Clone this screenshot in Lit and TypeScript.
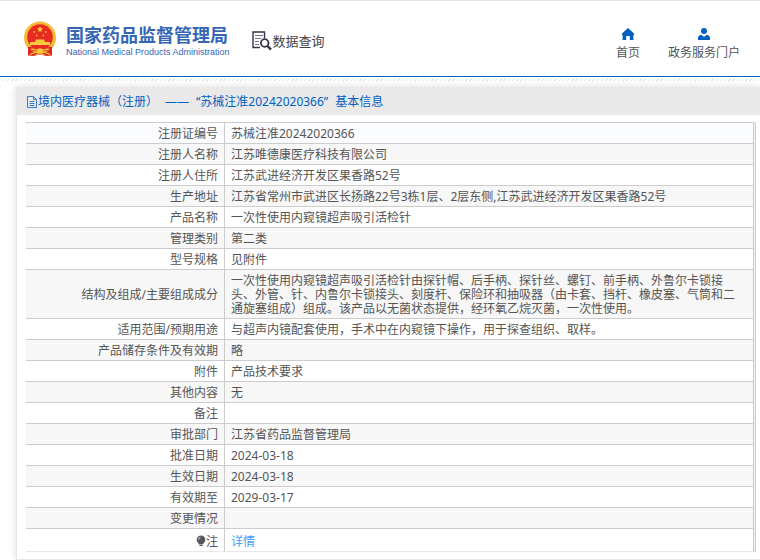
import { LitElement, html, css, svg } from "lit";
import { customElement } from "lit/decorators.js";

interface Row {
  label: string;
  value: string;
}

const ROWS: Row[] = [
  { label: "注册证编号", value: "苏械注准20242020366" },
  { label: "注册人名称", value: "江苏唯德康医疗科技有限公司" },
  { label: "注册人住所", value: "江苏武进经济开发区果香路52号" },
  { label: "生产地址", value: "江苏省常州市武进区长扬路22号3栋1层、2层东侧,江苏武进经济开发区果香路52号" },
  { label: "产品名称", value: "一次性使用内窥镜超声吸引活检针" },
  { label: "管理类别", value: "第二类" },
  { label: "型号规格", value: "见附件" },
  {
    label: "结构及组成/主要组成成分",
    value:
      "一次性使用内窥镜超声吸引活检针由探针帽、后手柄、探针丝、螺钉、前手柄、外鲁尔卡锁接头、外管、针、内鲁尔卡锁接头、刻度杆、保险环和抽吸器（由卡套、挡杆、橡皮塞、气筒和二通旋塞组成）组成。该产品以无菌状态提供，经环氧乙烷灭菌，一次性使用。",
  },
  { label: "适用范围/预期用途", value: "与超声内镜配套使用，手术中在内窥镜下操作，用于探查组织、取样。" },
  { label: "产品储存条件及有效期", value: "略" },
  { label: "附件", value: "产品技术要求" },
  { label: "其他内容", value: "无" },
  { label: "备注", value: "" },
  { label: "审批部门", value: "江苏省药品监督管理局" },
  { label: "批准日期", value: "2024-03-18" },
  { label: "生效日期", value: "2024-03-18" },
  { label: "有效期至", value: "2029-03-17" },
  { label: "变更情况", value: "" },
];

const star = (cx: number, cy: number, r: number) => {
  const points = Array.from({ length: 10 }, (_, i) => {
    const radius = i % 2 ? r * 0.42 : r;
    const angle = (Math.PI / 5) * i - Math.PI / 2;
    return `${(cx + radius * Math.cos(angle)).toFixed(2)},${(cy + radius * Math.sin(angle)).toFixed(2)}`;
  }).join(" ");
  return svg`<polygon points=${points} fill="#fbd23c" />`;
};

@customElement("nmpa-header")
export class NmpaHeader extends LitElement {
  static styles = css`
    :host {
      display: block;
      border-top: 1px solid #e2e2e2;
      border-bottom: 1px solid #0061c1;
    }
    .bar {
      display: flex;
      align-items: center;
      height: 75px;
      padding: 0 20px 0 23px;
    }
    a {
      color: inherit;
      text-decoration: none;
    }
    .brand {
      display: flex;
      align-items: center;
      gap: 9px;
      color: #3566b4;
    }
    .emblem {
      width: 34px;
      height: 36px;
    }
    .names {
      display: flex;
      flex-direction: column;
      padding-top: 4px;
      white-space: nowrap;
    }
    .zh {
      font-size: 18px;
      line-height: 22px;
      font-weight: 700;
    }
    .en {
      font: 9px/12px "Liberation Sans", Arial, sans-serif;
    }
    .query {
      display: flex;
      align-items: center;
      gap: 1px;
      margin: 4px 0 0 22px;
      font-size: 13px;
      line-height: 20px;
      color: #44444a;
      white-space: nowrap;
    }
    nav {
      display: flex;
      gap: 28px;
      margin-left: auto;
      padding-top: 12px;
      font-size: 12px;
      line-height: 18px;
      color: #555;
      white-space: nowrap;
    }
    nav a {
      display: flex;
      flex-direction: column;
      align-items: center;
      gap: 4px;
    }
    nav svg {
      fill: #0061c1;
    }
  `;

  render() {
    return html`
      <header class="bar">
        <a class="brand" href="#">
          <svg class="emblem" viewBox="0 0 34 36" aria-hidden="true">
            <path d="M5 24 H29 V34.6 L24 35 L17 33.4 L10 35 L5 34.6 Z" fill="#d92a20" />
            <circle cx="17" cy="16.5" r="16" fill="#f5bb34" />
            <circle cx="17" cy="16" r="12.8" fill="#e82a22" />
            ${star(17, 8.4, 3.4)} ${star(11.2, 11, 1.4)} ${star(22.8, 11, 1.4)}
            ${star(13.6, 14.4, 1.3)} ${star(20.4, 14.4, 1.3)}
            <path d="M13 18.4 h8 l1 2.6 h5 v3 h-20 v-3 h5 Z" fill="#f9c93a" />
            <path d="M4.6 26 Q11 25 17 28.4 Q23 25 29.4 26 L28.4 30 Q21 29 17 31.4 Q13 29 5.6 30 Z" fill="#de2d22" />
            <path d="M8 28.4 Q13 27.6 17 30.8 Q21 27.6 26 28.4" fill="none" stroke="#f7bd38" stroke-width="1.3" />
            <circle cx="17" cy="30" r="2.8" fill="#f9c93a" />
            <path d="M7 33.4 L14 31 M27 33.4 L20 31 M13 34 L17 32.2 L21 34" fill="none" stroke="#f5b62d" stroke-width="1.3" />
          </svg>
          <span class="names">
            <span class="zh">国家药品监督管理局</span>
            <span class="en">National Medical Products Administration</span>
          </span>
        </a>
        <a class="query" href="#">
          <svg width="20" height="20" viewBox="0 0 20 20" fill="none" stroke="#34344a" aria-hidden="true">
            <path d="M12.5 7 V1 H1 V16.5 H8" stroke-width="1.4" />
            <path d="M3 4.5 H11 M3 7.5 H9 M3 10.5 H7 M3 13.5 H7" stroke-width="1" stroke="#777785" />
            <circle cx="12.7" cy="12" r="3.8" stroke-width="1.8" />
            <path d="M15.5 15 L19 18.6" stroke-width="2.4" />
          </svg>
          <span>数据查询</span>
        </a>
        <nav>
          <a href="#">
            <svg width="12" height="12" viewBox="0 0 12 12" aria-hidden="true">
              <path d="M6 0 L12 5.4 V7 H11.4 V12 H7.8 V8 H4.2 V12 H0.6 V7 H0 V5.4 Z" />
            </svg>
            <span>首页</span>
          </a>
          <a href="#">
            <svg width="12" height="12" viewBox="0 0 12 12" aria-hidden="true">
              <circle cx="6" cy="3" r="3" />
              <path d="M0 12 V10 Q0.2 7.4 3.4 6.8 L6 9 L8.6 6.8 Q11.8 7.4 12 10 V12 Z" />
            </svg>
            <span>政务服务门户</span>
          </a>
        </nav>
      </header>
    `;
  }
}

@customElement("device-detail")
export class DeviceDetail extends LitElement {
  static styles = css`
    :host {
      display: block;
      margin-left: 16px;
      border: 1px solid #e6e6e6;
      border-width: 0 0 1px 1px;
      background: #fff;
      box-shadow: 0 0 8px rgba(0, 0, 0, 0.14);
    }
    .title {
      display: flex;
      align-items: center;
      margin: 0;
      padding: 5px 9px 3px;
      background: #e9e9e9;
      font-size: 12px;
      line-height: 20px;
      font-weight: 400;
      color: #0061c1;
      white-space: nowrap;
    }
    .parts {
      display: flex;
      gap: 7px;
    }
    .frame {
      margin: 7px 4px 7px 9px;
      border-right: 1px solid #cfcfd6;
      padding-right: 1px;
      background: #f0f0f6;
    }
    table {
      width: 100%;
      border-collapse: separate;
      border-spacing: 0;
      border-top: 1px solid #ccc;
      border-right: 1px solid #ccc;
      table-layout: fixed;
      background: #fff;
      font-size: 12px;
      line-height: 14px;
      color: #555;
    }
    .label-col {
      width: 199px;
    }
    th,
    td {
      height: 14px;
      padding: 4px 6px 2px;
      border-bottom: 1px solid #ccc;
      vertical-align: middle;
    }
    th {
      border-right: 1px solid #ccc;
      font-weight: 400;
      text-align: right;
    }
    td {
      padding-right: 12px;
      text-align: left;
    }
    tr:first-child {
      background: #fbfcff;
    }
    tr:nth-child(even) {
      background: #f7f7f7;
    }
    .note th,
    .note td {
      padding-top: 6px;
      border-bottom-color: #e8e8e8;
    }
    .note svg {
      vertical-align: -1px;
    }
    .note a {
      color: #409eff;
      text-decoration: none;
    }
  `;

  render() {
    return html`
      <h1 class="title">
        <svg width="12" height="12" viewBox="0 0 12 12" fill="none" stroke="#3a7cc8" aria-hidden="true">
          <path d="M1.5 0.5 H7.5 L10.5 3.5 V11.5 H1.5 Z M7.5 0.5 V3.5 H10.5 M3.5 5.5 H8.5 M3.5 7.5 H8.5 M3.5 9.5 H8.5" />
        </svg>
        <span class="parts">
          <span>境内医疗器械（注册）</span>
          <span>——</span>
          <span>“苏械注准20242020366”</span>
          <span>基本信息</span>
        </span>
      </h1>
      <div class="frame">
        <table>
          <colgroup>
            <col class="label-col" />
            <col />
          </colgroup>
          <tbody>
            ${ROWS.map(
              (row) => html`<tr>
                <th scope="row">${row.label}</th>
                <td>${row.value}</td>
              </tr>`
            )}
            <tr class="note">
              <th scope="row">
                <svg width="10" height="12" viewBox="0 0 10 12" aria-hidden="true"><path d="M5 0.5 A4.3 4.3 0 0 1 7.3 8.4 V9.2 H2.7 V8.4 A4.3 4.3 0 0 1 5 0.5 Z M3.4 9.8 H6.6 V11 H3.4 Z" fill="#55555c" /><path d="M2.4 4.6 Q2.6 2.8 4.4 2.4" fill="none" stroke="#ddd" /></svg>注
              </th>
              <td><a href="#">详情</a></td>
            </tr>
          </tbody>
        </table>
      </div>
    `;
  }
}

@customElement("app-root")
export class AppRoot extends LitElement {
  static styles = css`
    :host {
      display: block;
      overflow: hidden;
      background: #fff;
      font-family: "Noto Sans", "Noto Sans CJK SC", sans-serif;
      text-spacing-trim: space-all;
    }
    .page {
      padding: 2px 0 8px;
    }
    .hatch {
      height: 2px;
      margin-bottom: 6px;
      background: repeating-linear-gradient(135deg, #e4e4e4 0 1px, #fff 1px 3px);
    }
  `;

  render() {
    return html`
      <nmpa-header></nmpa-header>
      <main class="page">
        <div class="hatch"></div>
        <device-detail></device-detail>
      </main>
    `;
  }
}
